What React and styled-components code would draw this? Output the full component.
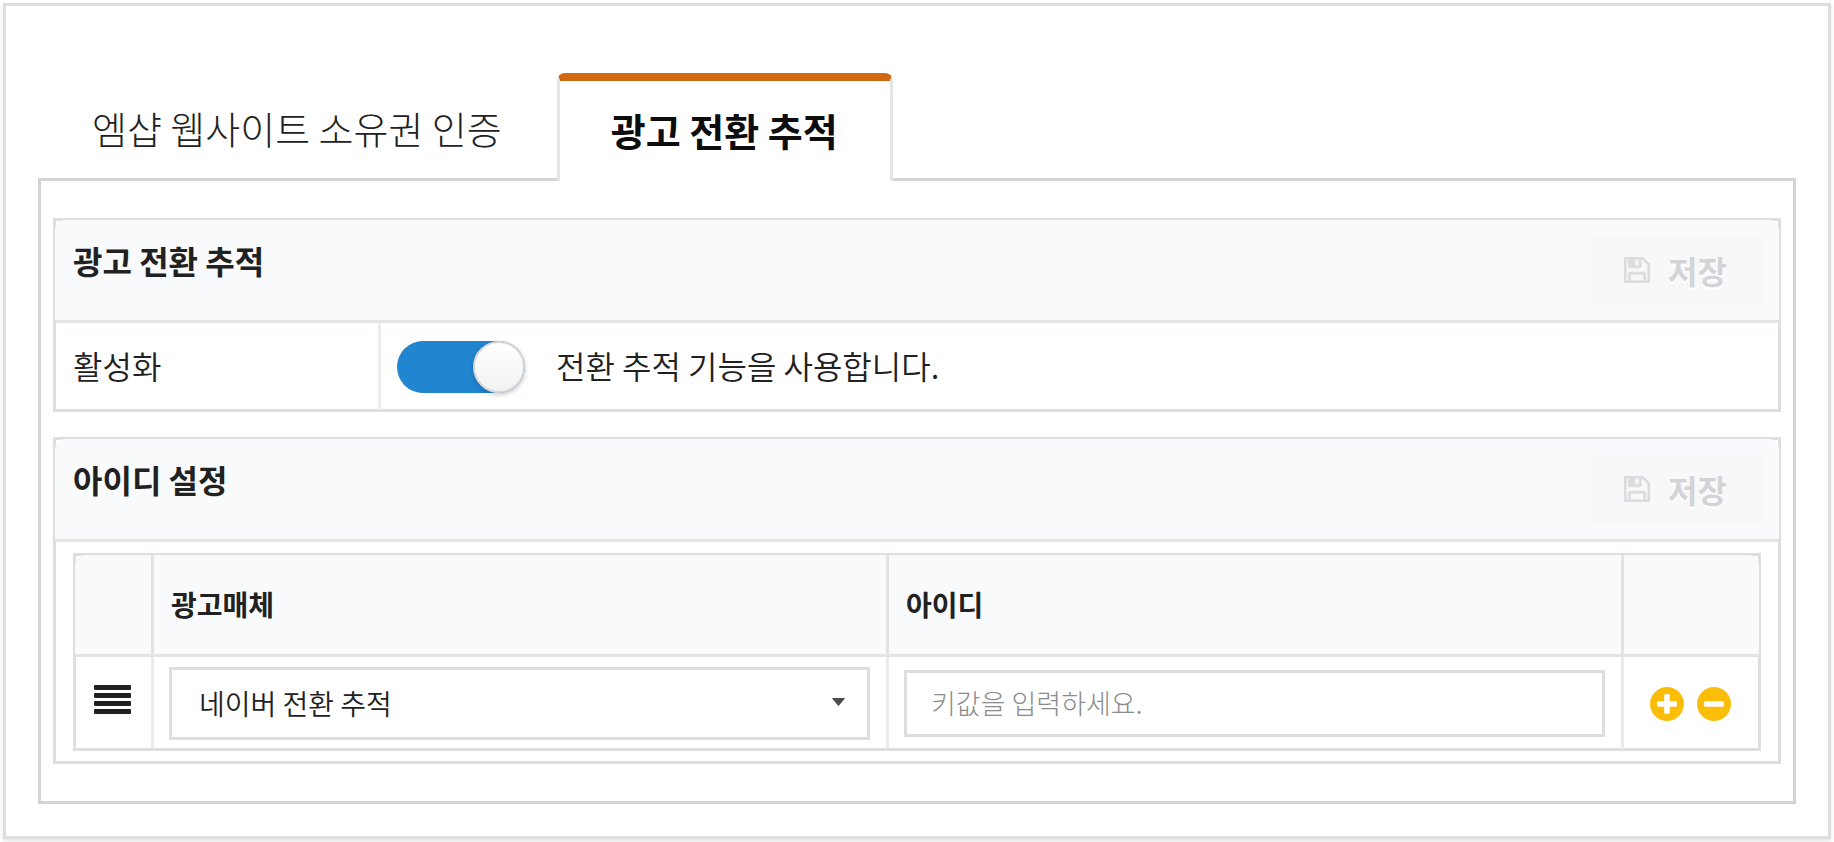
import { useState } from 'react';
import styled, { createGlobalStyle } from 'styled-components';

const GlobalStyle = createGlobalStyle`
  *,
  *::before,
  *::after {
    box-sizing: border-box;
  }

  body {
    margin: 0;
    padding: 3px;
    background: #fff;
    color: #212121;
    font-family: 'Noto Sans CJK KR', 'Noto Sans', sans-serif;
    font-size: 32px;
    font-weight: 300;
  }

  button,
  input,
  select {
    font-family: inherit;
    color: inherit;
  }
`;

const Page = styled.main`
  padding: 67px 32px 32px;
  border: 3px solid #dedede;
  box-shadow: 0 2px 4px rgba(0, 0, 0, 0.12);
`;

const TabList = styled.div`
  display: flex;
  position: relative;
  margin-bottom: -3px;
`;

const Tab = styled.button`
  padding: 0 52px 6px 51px;
  height: 108px;
  border: 3px solid transparent;
  border-top-width: 8px;
  border-bottom: 0;
  border-radius: 8px 8px 0 0;
  background: transparent;
  font-size: 38px;
  font-weight: 300;
  line-height: 56px;
  white-space: nowrap;
  cursor: pointer;

  &[aria-selected='true'] {
    padding-bottom: 2px;
    border-color: #d26911 #e5e5e5;
    background: #fff;
    color: #0d0d0d;
    font-weight: 700;
  }
`;

const TabPanel = styled.div`
  display: flex;
  flex-direction: column;
  gap: 25px;
  padding: 37px 12px;
  border: 3px solid #d4d4d4;
`;

const Box = styled.section`
  border: 2px solid #dedede;
  box-shadow: inset 0 0 0 1px #dedede;
`;

const BoxHeader = styled.header`
  display: flex;
  align-items: flex-start;
  justify-content: space-between;
  padding: 17px 17px 16px 18px;
  border-bottom: 3px solid #e2e4e4;
  border-radius: 10px 10px 0 0;
  background: #f9fafc;
`;

const Title = styled.h2`
  margin: 0;
  font-size: 32px;
  font-weight: 700;
  line-height: 46px;
`;

const SaveButton = styled.button`
  display: flex;
  align-items: center;
  gap: 18px;
  height: 67px;
  padding: 0 35px 2px 32px;
  border: 0;
  background: #f8f8f8;
  color: #d3d4d8;
  font-size: 32px;
  font-weight: 700;
  line-height: 48px;
  text-shadow: 0 2px 1px #fff;

  svg {
    width: 26px;
    height: 26px;
    fill: #dbdce0;
    stroke: #dbdce0;
    stroke-width: 40;
  }
`;

const Row = styled.div`
  display: flex;
  min-height: 87px;
`;

const RowLabel = styled.div`
  display: flex;
  align-items: center;
  flex: 0 0 326px;
  padding: 0 0 4px 18px;
  border-right: 3px solid #ebecec;
  font-weight: 350;
`;

const RowContent = styled.div`
  display: flex;
  align-items: center;
  padding-left: 16px;
`;

const SwitchLabel = styled.label`
  display: flex;
  align-items: center;
  gap: 31px;
  font-weight: 350;
  cursor: pointer;
`;

const SwitchText = styled.span`
  padding-bottom: 4px;
`;

const Switch = styled.input`
  appearance: none;
  display: flex;
  width: 128px;
  height: 52px;
  margin: 0;
  border-radius: 26px;
  background: #dcdcdc;
  cursor: pointer;

  &::before {
    content: '';
    width: 52px;
    height: 52px;
    border: 2px solid #d8d8d8;
    border-radius: 50%;
    background: linear-gradient(#fff, #f2f2f2);
    box-shadow: 0 2px 5px rgba(0, 0, 0, 0.2);
  }

  &:checked {
    justify-content: flex-end;
    background: #2185d0;
  }
`;

const BoxBody = styled.div`
  padding: 11px 18px;
`;

const Table = styled.table`
  width: 100%;
  table-layout: fixed;
  border-collapse: separate;
  border-spacing: 0;
`;

const HeadCell = styled.th`
  width: ${(props) => props.$width || 'auto'};
  height: 102px;
  padding: 0 15px 2px 17px;
  border-right: 3px solid #e2e4e4;
  border-bottom: 3px solid #e2e4e4;
  background: #f9fafc;
  font-size: 28px;
  font-weight: 700;
  line-height: 42px;
  text-align: left;

  &:first-child {
    border-top-left-radius: 10px;
  }

  &:last-child {
    border-right: 0;
    border-top-right-radius: 10px;
  }
`;

const Cell = styled.td`
  height: 92px;
  padding: 0 16px 0 15px;
  border-right: 3px solid #ebebeb;
  text-align: ${(props) => props.$align || 'left'};
  line-height: 0;

  &:last-child {
    border-right: 0;
  }
`;

const SelectWrap = styled.div`
  position: relative;

  svg {
    position: absolute;
    top: 31px;
    right: 25px;
    width: 13px;
    height: 8px;
    fill: #4c4c4c;
    pointer-events: none;
  }
`;

const Select = styled.select`
  appearance: none;
  width: 100%;
  height: 73px;
  padding: 0 60px 0 27px;
  border: 3px solid #dedede;
  border-radius: 0;
  background: #fff;
  font-size: 28px;
  font-weight: 350;
`;

const TextInput = styled.input`
  width: 100%;
  height: 67px;
  padding: 0 24px 2px;
  border: 3px solid #dedede;
  background: #fff;
  font-size: 27px;
  font-weight: 300;

  &::placeholder {
    color: #8c8c8c;
  }
`;

const IconButton = styled.button`
  padding: 0;
  border: 0;
  background: none;
  line-height: 0;
  cursor: pointer;

  svg {
    display: block;
  }
`;

const Actions = styled.div`
  display: flex;
  justify-content: center;
  gap: 13px;
  padding: 2px 2px 0 0;

  svg {
    width: 34px;
    height: 34px;
    fill: #fbbd08;
  }
`;

const SaveIcon = () => (
  <svg viewBox="128 128 1536 1536" aria-hidden="true">
    <path d="M512 1536h768v-384h-768v384zm896 0h128v-896q0-14-10-38.5t-20-34.5l-281-281q-10-10-34-20t-39-10v416q0 40-28 68t-68 28h-576q-40 0-68-28t-28-68v-416h-128v1280h128v-416q0-40 28-68t68-28h832q40 0 68 28t28 68v416zm-384-928v-320q0-13-9.5-22.5t-22.5-9.5h-192q-13 0-22.5 9.5t-9.5 22.5v320q0 13 9.5 22.5t22.5 9.5h192q13 0 22.5-9.5t9.5-22.5zm640 32v928q0 40-28 68t-68 28h-1344q-40 0-68-28t-28-68v-1344q0-40 28-68t68-28h928q40 0 88 20t76 48l280 280q28 28 48 76t20 88z" />
  </svg>
);

const PlusIcon = () => (
  <svg viewBox="128 128 1536 1536" aria-hidden="true">
    <path d="M1344 960v-128q0-26-19-45t-45-19h-256v-256q0-26-19-45t-45-19h-128q-26 0-45 19t-19 45v256h-256q-26 0-45 19t-19 45v128q0 26 19 45t45 19h256v256q0 26 19 45t45 19h128q26 0 45-19t19-45v-256h256q26 0 45-19t19-45zm320-64q0 209-103 385.5t-279.5 279.5-385.5 103-385.5-103-279.5-279.5-103-385.5 103-385.5 279.5-279.5 385.5-103 385.5 103 279.5 279.5 103 385.5z" />
  </svg>
);

const MinusIcon = () => (
  <svg viewBox="128 128 1536 1536" aria-hidden="true">
    <path d="M1344 960v-128q0-26-19-45t-45-19h-768q-26 0-45 19t-19 45v128q0 26 19 45t45 19h768q26 0 45-19t19-45zm320-64q0 209-103 385.5t-279.5 279.5-385.5 103-385.5-103-279.5-279.5-103-385.5 103-385.5 279.5-279.5 385.5-103 385.5 103 279.5 279.5 103 385.5z" />
  </svg>
);

const HandleIcon = () => (
  <svg width="37" height="37" viewBox="0 0 37 37" fill="#212121" aria-hidden="true">
    <rect y="0" width="37" height="5" rx="1" />
    <rect y="8" width="37" height="5" rx="1" />
    <rect y="16" width="37" height="5" rx="1" />
    <rect y="24" width="37" height="5" rx="1" />
  </svg>
);

const Section = ({ title, children }) => (
  <Box>
    <BoxHeader>
      <Title>{title}</Title>
      <SaveButton type="button" disabled>
        <SaveIcon />
        저장
      </SaveButton>
    </BoxHeader>
    {children}
  </Box>
);

const tabs = ['엠샵 웹사이트 소유권 인증', '광고 전환 추적'];

const App = () => {
  const [activeTab, setActiveTab] = useState(1);
  const [enabled, setEnabled] = useState(true);
  const [key, setKey] = useState('');

  return (
    <>
      <GlobalStyle />
      <Page>
        <TabList role="tablist">
          {tabs.map((tab, index) => (
            <Tab
              key={tab}
              type="button"
              role="tab"
              aria-selected={index === activeTab}
              onClick={() => setActiveTab(index)}
            >
              {tab}
            </Tab>
          ))}
        </TabList>
        <TabPanel role="tabpanel">
          <Section title="광고 전환 추적">
            <Row>
              <RowLabel>활성화</RowLabel>
              <RowContent>
                <SwitchLabel>
                  <Switch
                    type="checkbox"
                    checked={enabled}
                    onChange={(e) => setEnabled(e.target.checked)}
                  />
                  <SwitchText>전환 추적 기능을 사용합니다.</SwitchText>
                </SwitchLabel>
              </RowContent>
            </Row>
          </Section>
          <Section title="아이디 설정">
            <BoxBody>
              <Box as="div">
                <Table>
                  <thead>
                    <tr>
                      <HeadCell $width="79px" />
                      <HeadCell>광고매체</HeadCell>
                      <HeadCell>아이디</HeadCell>
                      <HeadCell $width="135px" />
                    </tr>
                  </thead>
                  <tbody>
                    <tr>
                      <Cell $align="center">
                        <IconButton type="button" aria-label="순서 변경">
                          <HandleIcon />
                        </IconButton>
                      </Cell>
                      <Cell>
                        <SelectWrap>
                          <Select aria-label="광고매체" defaultValue="naver">
                            <option value="naver">네이버 전환 추적</option>
                          </Select>
                          <svg viewBox="0 0 13 8" aria-hidden="true">
                            <path d="M1 0h11q1.500 0 .5 1L7 7.500q-.5.500-1 0L.5 1Q-.5 0 1 0z" />
                          </svg>
                        </SelectWrap>
                      </Cell>
                      <Cell>
                        <TextInput
                          type="text"
                          aria-label="아이디"
                          placeholder="키값을 입력하세요."
                          value={key}
                          onChange={(e) => setKey(e.target.value)}
                        />
                      </Cell>
                      <Cell>
                        <Actions>
                          <IconButton type="button" aria-label="추가">
                            <PlusIcon />
                          </IconButton>
                          <IconButton type="button" aria-label="삭제">
                            <MinusIcon />
                          </IconButton>
                        </Actions>
                      </Cell>
                    </tr>
                  </tbody>
                </Table>
              </Box>
            </BoxBody>
          </Section>
        </TabPanel>
      </Page>
    </>
  );
};

export default App;
